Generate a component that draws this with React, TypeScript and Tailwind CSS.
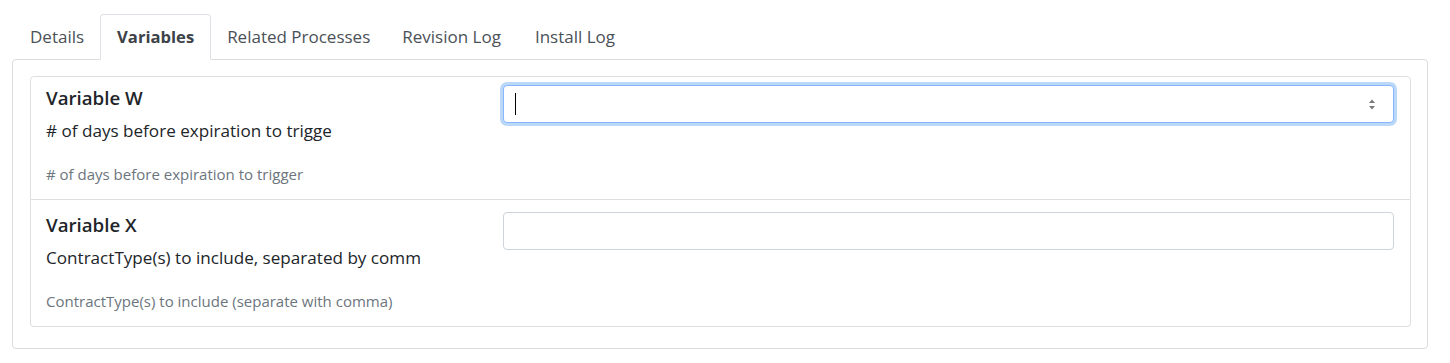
const tabs = ["Details", "Variables", "Related Processes", "Revision Log", "Install Log"];

const VariableRow = ({
  title,
  label,
  help,
  focused,
  first,
}: {
  title: string;
  label: string;
  help: string;
  focused?: boolean;
  first?: boolean;
}) => {
  return (
    <div
      className={
        first
          ? "flex border border-[#dfdfdf] rounded-t-[4px] pt-[8px] pb-[14px]"
          : "flex border-x border-b border-[#dfdfdf] rounded-b-[4px] pt-[12px] pb-[14px]"
      }
    >
      <div className="w-[472px] pl-[15px] pr-[15px]">
        <div className="mt-[2px] text-[18.7px] leading-[22px] font-semibold text-[#212529]">{title}</div>
        <div className="mt-[10px] text-[17.1px] leading-[24px] text-[#212529]">{label}</div>
        <div className="mt-[21px] text-[15px] leading-[21px] text-[#6c757d]">{help}</div>
      </div>
      <div className="flex-1 pr-[16px]">
        {focused ? (
          <div className="relative h-[38px] rounded-[4px] border border-[#86b7fe] bg-white shadow-[0_0_0_3px_#bcd8f8]">
            <span className="absolute left-[11px] top-[7px] h-[22px] w-px bg-black" />
            <svg
              className="absolute right-[17px] top-[12px]"
              width="8"
              height="13"
              viewBox="0 0 8 13"
            >
              <path d="M4 1.5 L7 5 L1 5 Z" fill="#7a7a7a" />
              <path d="M4 11.5 L7 8 L1 8 Z" fill="#7a7a7a" />
            </svg>
          </div>
        ) : (
          <div className="h-[38px] rounded-[4px] border border-[#ced4da] bg-white" />
        )}
      </div>
    </div>
  );
};

export default function App() {
  return (
    <div className="min-h-[363px] bg-white pt-[14px] font-['Open_Sans',sans-serif]">
      <div className="ml-[12px] w-[1416px]">
        <div className="flex pl-[2px] relative z-10">
          {tabs.map((t) =>
            t === "Variables" ? (
              <div
                key={t}
                className="px-[16px] pt-[10px] pb-[10px] -mb-px text-[16.6px] leading-[24px] font-bold text-[#3d4248] bg-white border border-[#dee2e6] border-b-white rounded-t-[4px]"
              >
                {t}
              </div>
            ) : (
              <div
                key={t}
                className={
                  t === "Revision Log"
                    ? "pl-[16px] pr-[18px] pt-[11px] pb-[10px] text-[17px] leading-[24px] text-[#4b5157]"
                    : "px-[16px] pt-[11px] pb-[10px] text-[17px] leading-[24px] text-[#4b5157]"
                }
              >
                {t}
              </div>
            )
          )}
        </div>
        <div className="border border-[#dcdcdc] rounded-[4px] pl-[17px] pr-[16px] pt-[16px] pb-[21px]">
          <VariableRow
            first
            focused
            title="Variable W"
            label="# of days before expiration to trigge"
            help="# of days before expiration to trigger"
          />
          <VariableRow
            title="Variable X"
            label="ContractType(s) to include, separated by comm"
            help="ContractType(s) to include (separate with comma)"
          />
        </div>
      </div>
    </div>
  );
}
